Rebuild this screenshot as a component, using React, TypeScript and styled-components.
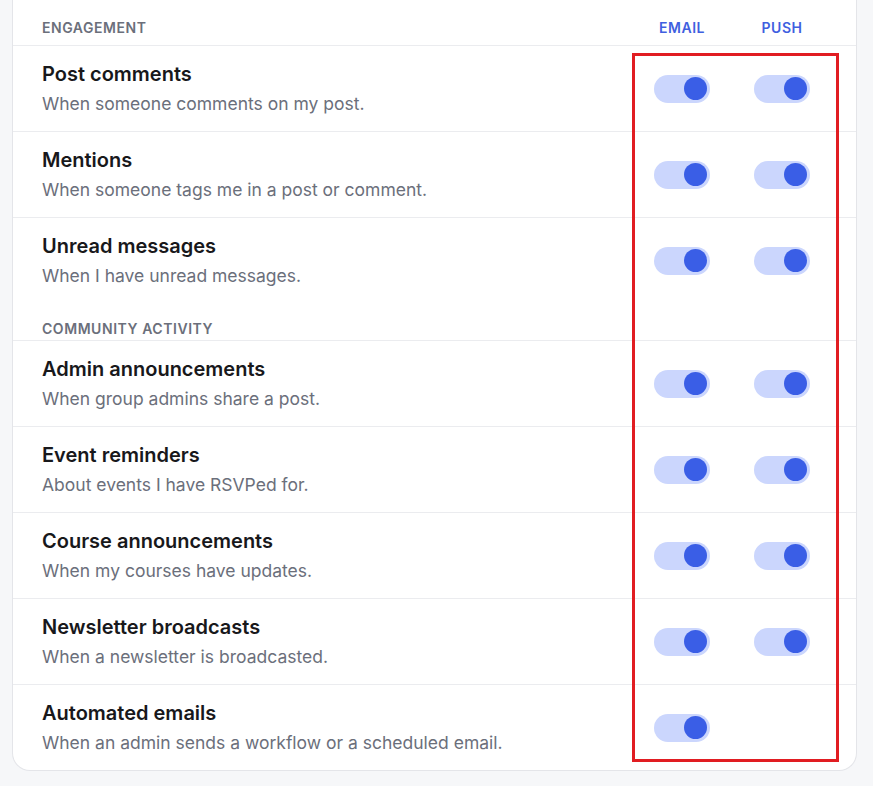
import React from 'react'
import styled, { createGlobalStyle } from 'styled-components'

type Pref = {
  title: string
  description: string
  email?: boolean
  push?: boolean
}

type Section = {
  label: string
  items: Pref[]
}

const sections: Section[] = [
  {
    label: 'Engagement',
    items: [
      { title: 'Post comments', description: 'When someone comments on my post.', email: true, push: true },
      { title: 'Mentions', description: 'When someone tags me in a post or comment.', email: true, push: true },
      { title: 'Unread messages', description: 'When I have unread messages.', email: true, push: true },
    ],
  },
  {
    label: 'Community activity',
    items: [
      { title: 'Admin announcements', description: 'When group admins share a post.', email: true, push: true },
      { title: 'Event reminders', description: 'About events I have RSVPed for.', email: true, push: true },
      { title: 'Course announcements', description: 'When my courses have updates.', email: true, push: true },
      { title: 'Newsletter broadcasts', description: 'When a newsletter is broadcasted.', email: true, push: true },
      { title: 'Automated emails', description: 'When an admin sends a workflow or a scheduled email.', email: true },
    ],
  },
]

const Toggle: React.FC<{ on: boolean }> = ({ on }) => (
  <Track $on={on} role='switch' aria-checked={on}>
    <Knob $on={on} />
  </Track>
)

export default function App() {
  return (
    <Page>
      <GlobalStyle />
      <Card>
        {sections.map((section, si) => (
          <div key={section.label}>
            <SectionHead $first={si === 0}>
              <SectionLabel>{section.label}</SectionLabel>
              {si === 0 && (
                <>
                  <ChannelLabel>Email</ChannelLabel>
                  <ChannelLabel>Push</ChannelLabel>
                </>
              )}
            </SectionHead>
            {section.items.map((item, i) => (
              <Row key={item.title} $divider={i < section.items.length - 1}>
                <Text>
                  <Title>{item.title}</Title>
                  <Description>{item.description}</Description>
                </Text>
                <Cell>{item.email !== undefined && <Toggle on={item.email} />}</Cell>
                <Cell>{item.push !== undefined && <Toggle on={item.push} />}</Cell>
              </Row>
            ))}
          </div>
        ))}
        <Highlight />
      </Card>
    </Page>
  )
}

const GlobalStyle = createGlobalStyle`
  html, body {
    margin: 0;
    background: #f6f7f9;
    font-family: Inter, 'Noto Sans', sans-serif;
    -webkit-font-smoothing: antialiased;
  }
`

const Page = styled.div`
  padding: 0 16px 15px 12px;
  height: 786px;
  box-sizing: border-box;
  overflow: hidden;
`

const Card = styled.section`
  position: relative;
  background: #fff;
  border: 1px solid #e4e5e9;
  border-top: 0;
  border-radius: 0 0 18px 18px;
`

const SectionHead = styled.div<{ $first: boolean }>`
  display: grid;
  grid-template-columns: 1fr 100px 100px;
  align-items: center;
  padding: ${(p) => (p.$first ? '20px 24px 9px 29px' : '18px 24px 3px 29px')};
  border-bottom: 1px solid #ebecef;
`

const SectionLabel = styled.div`
  font-size: 14px;
  line-height: 16px;
  font-weight: 600;
  letter-spacing: 0.55px;
  text-transform: uppercase;
  color: #6b6f7b;
`

const ChannelLabel = styled.div`
  font-size: 14px;
  line-height: 16px;
  font-weight: 600;
  letter-spacing: 0.5px;
  text-transform: uppercase;
  text-align: center;
  color: #3f5fe0;
`

const Row = styled.div<{ $divider: boolean }>`
  display: grid;
  grid-template-columns: 1fr 100px 100px;
  align-items: center;
  padding: 15px 24px 15px 29px;
  border-bottom: ${(p) => (p.$divider ? '1px solid #ebecef' : '0')};
`

const Text = styled.div`
  display: flex;
  flex-direction: column;
  gap: 4px;
`

const Title = styled.div`
  font-size: 20px;
  line-height: 27px;
  font-weight: 600;
  color: #18181b;
`

const Description = styled.div`
  font-size: 17.5px;
  line-height: 24px;
  color: #6b6f7b;
`

const Cell = styled.div`
  display: flex;
  justify-content: center;
`

const Track = styled.div<{ $on: boolean }>`
  width: 56px;
  height: 28px;
  border-radius: 14px;
  background: ${(p) => (p.$on ? '#cbd6fd' : '#e4e5e9')};
  display: flex;
  align-items: center;
  justify-content: ${(p) => (p.$on ? 'flex-end' : 'flex-start')};
  padding: 0 3px;
  box-sizing: border-box;
`

const Knob = styled.span<{ $on: boolean }>`
  width: 23px;
  height: 23px;
  border-radius: 50%;
  background: ${(p) => (p.$on ? '#3a5ee6' : '#fff')};
`

// red outline drawn over the email/push columns
const Highlight = styled.div`
  position: absolute;
  left: 619px;
  top: 53px;
  width: 207px;
  height: 709px;
  box-sizing: border-box;
  border: 3px solid #e11d22;
  pointer-events: none;
`
